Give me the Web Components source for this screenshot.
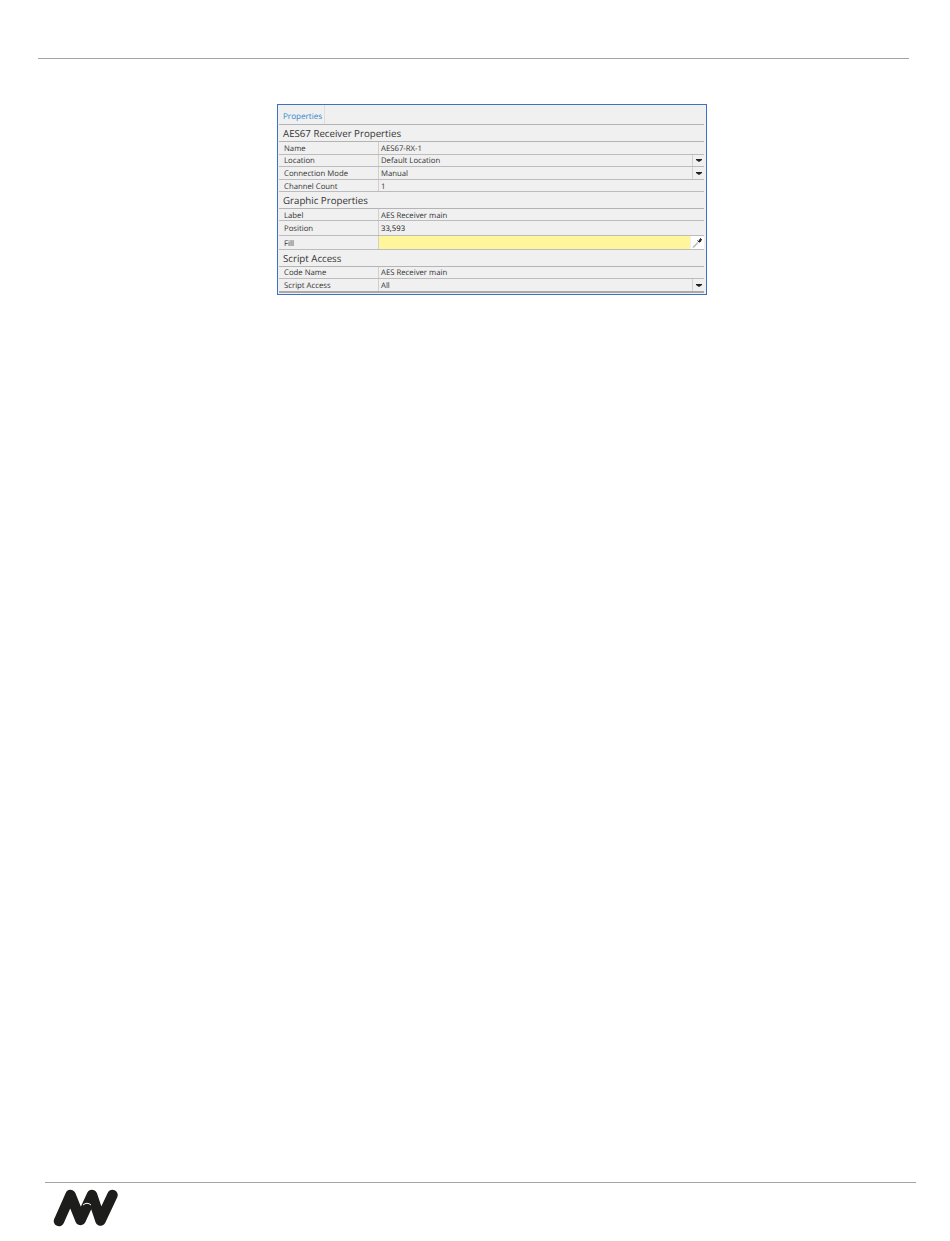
<!DOCTYPE html>
<html>
<head>
<meta charset="utf-8">
<title>AES67 Receiver Properties</title>
<style>
	html, body { margin: 0; padding: 0; background: #fff; }
	body { width: 950px; height: 1241px; overflow: hidden; }
</style>
</head>
<body>
<page-sheet>
	<prop-panel tab="Properties">
		<prop-section label="AES67 Receiver Properties" h="17"></prop-section>
		<prop-row label="Name" value="AES67-RX-1" h="13" lh="14"></prop-row>
		<prop-row label="Location" value="Default Location" kind="select" h="12" lh="13"></prop-row>
		<prop-row label="Connection Mode" value="Manual" kind="select" h="13" lh="14"></prop-row>
		<prop-row label="Channel Count" value="1" h="12" lh="15"></prop-row>
		<prop-section label="Graphic Properties" h="17"></prop-section>
		<prop-row label="Label" value="AES Receiver main" h="12" lh="15"></prop-row>
		<prop-row label="Position" value="33,593" h="15" lh="16" dark></prop-row>
		<prop-row label="Fill" kind="color" h="14" lh="17"></prop-row>
		<prop-section label="Script Access" h="17"></prop-section>
		<prop-row label="Code Name" value="AES Receiver main" h="12" lh="13"></prop-row>
		<prop-row label="Script Access" value="All" kind="select" h="14" lh="15" last></prop-row>
	</prop-panel>
</page-sheet>

<script>
class PageSheet extends HTMLElement {
	constructor() {
		super();
		this.attachShadow({ mode: "open" });
		this.shadowRoot.innerHTML = `
			<style>
				:host {
					display: flex;
					flex-direction: column;
					height: 1241px;
				}
				.top {
					height: 58px;
					margin: 0 41px 0 38px;
					border-bottom: 1px solid #a3a3a3;
				}
				main {
					flex: 1;
					padding: 45px 0 0 277px;
				}
				footer {
					box-sizing: border-box;
					height: 59px;
					margin: 0 34px 0 45px;
					border-top: 1px solid #a3a3a3;
					padding: 5px 0 0 8px;
				}
				svg { display: block; }
			</style>
			<div class="top"></div>
			<main><slot></slot></main>
			<footer>
				<svg width="68" height="42" viewBox="0 0 68 42">
					<path d="M6 33 L17.5 7 L27.5 32 L39 7 L47.5 32.5 L59.5 7" fill="none" stroke="#1d1d1b" stroke-width="10.5" stroke-linecap="round" stroke-linejoin="round"/>
					<path d="M30 17 Q34 13.5 38 17" fill="none" stroke="#fff" stroke-width="1"/>
				</svg>
			</footer>
		`;
	}
}

class PropPanel extends HTMLElement {
	constructor() {
		super();
		this.attachShadow({ mode: "open" });
	}

	connectedCallback() {
		this.shadowRoot.innerHTML = `
			<style>
				:host {
					display: block;
					width: 430px;
					height: 191px;
					box-sizing: border-box;
					border: 1px solid #3d6fc4;
					background: #f0f0f0;
					padding: 0 2px 0 1px;
					font-family: "Open Sans", "Noto Sans", sans-serif;
					text-rendering: geometricPrecision;
					color: #333;
				}
				.tabs {
					height: 19px;
					border-bottom: 1px solid #b4b4b6;
					display: flex;
				}
				.tab {
					padding: 6px 2px 0 4px;
					border-right: 1px solid #dedede;
					font-size: 8.1px;
					line-height: 12px;
					color: #2b86cf;
				}
			</style>
			<div class="tabs"><div class="tab">${this.getAttribute("tab")}</div></div>
			<slot></slot>
		`;
	}
}

class PropSection extends HTMLElement {
	constructor() {
		super();
		this.attachShadow({ mode: "open" });
	}

	connectedCallback() {
		const h = this.getAttribute("h");
		this.shadowRoot.innerHTML = `
			<style>
				:host {
					display: block;
					box-sizing: border-box;
					height: ${h}px;
					border-bottom: 1px solid #b4b4b6;
					padding-left: 4px;
					font-size: 9.7px;
					line-height: 17px;
					color: #333;
				}
			</style>
			<span>${this.getAttribute("label")}</span>
		`;
	}
}

class PropRow extends HTMLElement {
	constructor() {
		super();
		this.attachShadow({ mode: "open" });
	}

	connectedCallback() {
		const h = Number(this.getAttribute("h"));
		const lh = this.getAttribute("lh");
		const kind = this.getAttribute("kind");
		const value = this.getAttribute("value") || "";
		let extra = "";
		if (kind === "select") {
			extra = `<div class="arrow"><svg width="6" height="3" viewBox="0 0 6 3"><path d="M0 0H6V1L3 3L0 1Z" fill="#222"/></svg></div>`;
		}
		if (kind === "color") {
			extra = `<div class="dropper"><svg width="11" height="11" viewBox="0 0 11 11">
				<path d="M1 10.5 L6 5.5" stroke="#bbb" stroke-width="1.6" fill="none"/>
				<path d="M5.5 3.5 L7.5 5.5 M7 4 L8.5 1.5 L9.5 2.5 L8 5 Z" stroke="#222" stroke-width="1" fill="#222"/>
			</svg></div>`;
		}
		this.shadowRoot.innerHTML = `
			<style>
				:host {
					display: grid;
					grid-template-columns: 100px 1fr;
					grid-template-rows: minmax(0, 1fr);
					box-sizing: border-box;
					height: ${h}px;
					border-bottom: ${this.hasAttribute("last") ? "2px solid #a9a9ab" : "1px solid #bcbcbe"};
					font-size: 7.75px;
					color: #333;
				}
				.label {
					padding-left: 5px;
					border-right: 1px solid #d0d0d0;
					line-height: ${lh}px;
				}
				.value {
					display: flex;
					min-width: 0;
					min-height: 0;
				}
				.text {
					flex: 1;
					padding-left: 2px;
					line-height: ${lh}px;
					color: ${this.hasAttribute("dark") ? "#111" : "#333"};
				}
				.swatch { flex: 1; background: #fff59b; }
				.arrow {
					width: 11px;
					border-left: 1px solid #d0d0d0;
					display: flex;
					align-items: center;
					justify-content: center;
				}
				.dropper {
					width: 13px;
					margin-left: 1px;
					background: #fff;
					display: flex;
					align-items: center;
					justify-content: center;
				}
			</style>
			<div class="label">${this.getAttribute("label")}</div>
			<div class="value">
				${kind === "color" ? `<div class="swatch"></div>` : `<div class="text">${value}</div>`}
				${extra}
			</div>
		`;
	}
}

customElements.define("page-sheet", PageSheet);
customElements.define("prop-panel", PropPanel);
customElements.define("prop-section", PropSection);
customElements.define("prop-row", PropRow);
</script>
</body>
</html>
